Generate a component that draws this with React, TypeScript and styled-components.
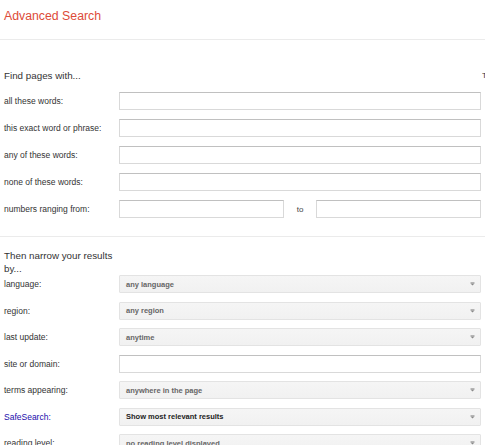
import React from "react";
import styled, { createGlobalStyle } from "styled-components";

const Global = createGlobalStyle`
  html, body { margin: 0; padding: 0; background: #fff; overflow: hidden; }
  body { font-family: "Liberation Sans", Arial, sans-serif; color: #222; width: 485px; }
`;

const Page = styled.div`
  width: 485px;
  overflow: hidden;
`;

const Header = styled.header`
  height: 40px;
  box-sizing: border-box;
  border-bottom: 1px solid #ebebeb;
  padding: 9px 0 0 4px;
`;

const Title = styled.h1`
  margin: 0;
  font-size: 12.3px;
  line-height: 14px;
  font-weight: normal;
  color: #dd4b39;
`;

const Section = styled.section<{ $top: number; $bottom: number; $divider?: boolean }>`
  padding: ${(p) => p.$top}px 4px ${(p) => p.$bottom}px 4px;
  border-bottom: ${(p) => (p.$divider ? "1px solid #ebebeb" : "none")};
`;

const HeadingRow = styled.div`
  display: flex;
  align-items: center;
  justify-content: space-between;
  width: 520px;
`;

const Heading = styled.h2<{ $wrap?: boolean }>`
  margin: 0;
  font-size: 9.8px;
  line-height: 13px;
  font-weight: normal;
  color: #333;
  max-width: ${(p) => (p.$wrap ? "115px" : "none")};
`;

const Hint = styled.span`
  font-size: 8px;
  color: #333;
  white-space: nowrap;
  width: 42px;
  overflow: hidden;
`;

const Rows = styled.div<{ $gap: number; $top: number }>`
  display: grid;
  grid-template-columns: 115px 1fr;
  row-gap: ${(p) => p.$gap}px;
  margin-top: ${(p) => p.$top}px;
  align-items: center;
`;

const Label = styled.label<{ $link?: boolean }>`
  font-size: 8.5px;
  line-height: 18px;
  color: ${(p) => (p.$link ? "#1a0dab" : "#333")};
  white-space: nowrap;
`;

const TextInput = styled.input`
  box-sizing: border-box;
  height: 18px;
  width: 100%;
  margin: 0;
  padding: 0 4px;
  border: 1px solid #d9d9d9;
  border-top-color: #c0c0c0;
  background: #fff;
  font-family: inherit;
  font-size: 8px;
  outline: none;
`;

const RangeRow = styled.div`
  display: grid;
  grid-template-columns: 165px 32px 165px;
  align-items: center;
`;

const To = styled.span`
  font-size: 8px;
  color: #444;
  text-align: center;
`;

const Select = styled.div<{ $strong?: boolean }>`
  box-sizing: border-box;
  height: 18px;
  display: flex;
  align-items: center;
  justify-content: space-between;
  padding: 0 5px 0 6px;
  border: 1px solid #e3e3e3;
  border-radius: 1px;
  background: linear-gradient(#f5f5f5, #f1f1f1);
  font-size: 7.5px;
  font-weight: bold;
  color: ${(p) => (p.$strong ? "#222" : "#666")};
  white-space: nowrap;
`;

const Arrow = () => (
  <svg width="5" height="4" viewBox="0 0 5 4">
    <rect x="0.5" y="0.5" width="4" height="0.8" fill="#777" />
    <path d="M0.5 1.6 H4.5 L2.5 3.6 Z" fill="#888" />
  </svg>
);

const Drop = ({ value, strong }: { value: string; strong?: boolean }) => (
  <Select $strong={strong}>
    <span>{value}</span>
    <Arrow />
  </Select>
);

const findRows = [
  "all these words:",
  "this exact word or phrase:",
  "any of these words:",
  "none of these words:",
];

export default function App() {
  return (
    <Page>
      <Global />
      <Header>
        <Title>Advanced Search</Title>
      </Header>
      <Section $top={29} $bottom={18} $divider>
        <HeadingRow>
          <Heading>Find pages with...</Heading>
          <Hint>To do this in the search box.</Hint>
        </HeadingRow>
        <Rows $gap={9} $top={10}>
          {findRows.map((l) => (
            <React.Fragment key={l}>
              <Label>{l}</Label>
              <TextInput />
            </React.Fragment>
          ))}
          <Label>numbers ranging from:</Label>
          <RangeRow>
            <TextInput />
            <To>to</To>
            <TextInput />
          </RangeRow>
        </Rows>
      </Section>
      <Section $top={12} $bottom={0}>
        <Heading $wrap>Then narrow your results by...</Heading>
        <Rows $gap={8.5} $top={0}>
          <Label>language:</Label>
          <Drop value="any language" />
          <Label>region:</Label>
          <Drop value="any region" />
          <Label>last update:</Label>
          <Drop value="anytime" />
          <Label>site or domain:</Label>
          <TextInput />
          <Label>terms appearing:</Label>
          <Drop value="anywhere in the page" />
          <Label $link>SafeSearch:</Label>
          <Drop value="Show most relevant results" strong />
          <Label>reading level:</Label>
          <Drop value="no reading level displayed" />
        </Rows>
      </Section>
    </Page>
  );
}
